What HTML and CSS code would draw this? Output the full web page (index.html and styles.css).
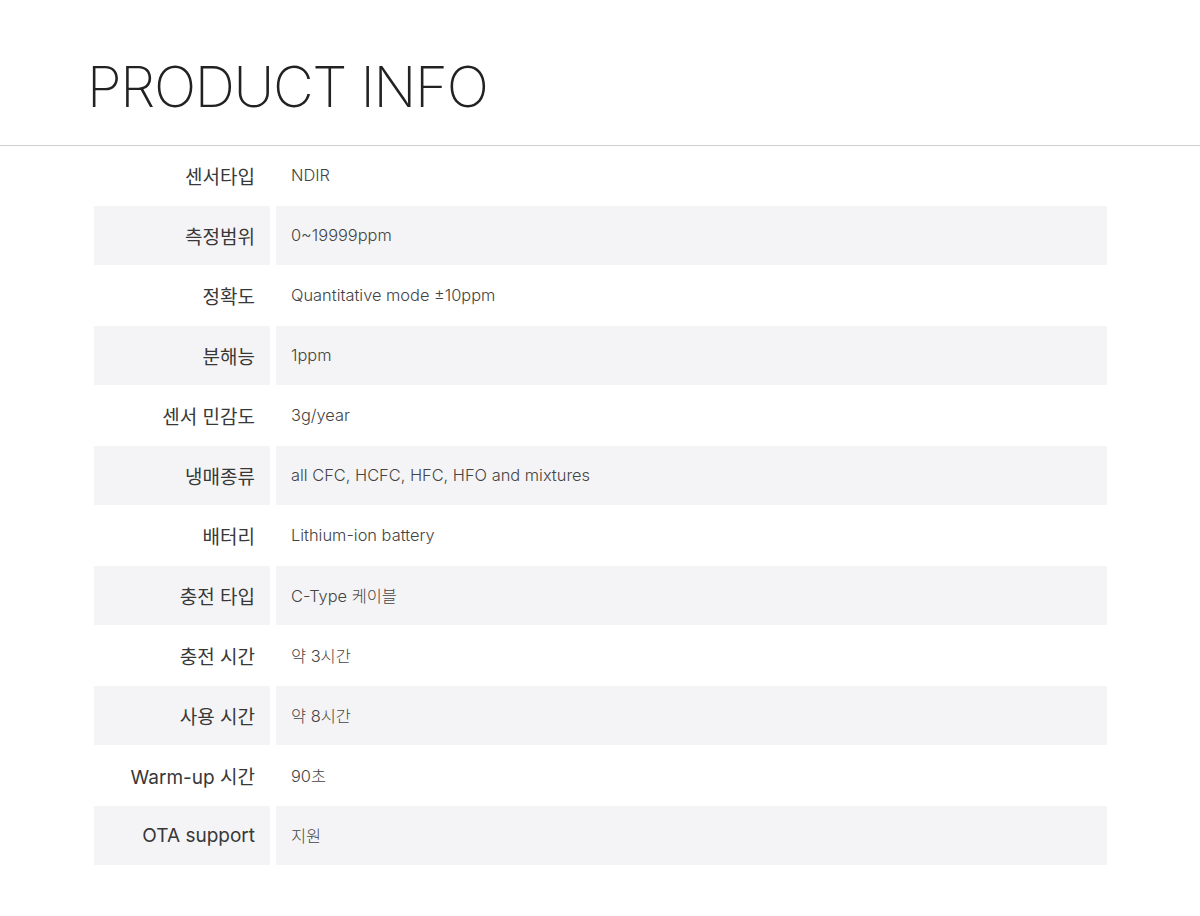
FILE: index.html
```html
<!DOCTYPE html>
<html lang="ko">
<head>
<meta charset="utf-8">
<link rel="stylesheet" href="styles.css">
</head>
<body>
<header class="head">
  <h1 class="title">PRODUCT INFO</h1>
</header>
<section class="spec">
  <div class="row"><div class="label">센서타입</div><div class="value">NDIR</div></div>
  <div class="row alt"><div class="label">측정범위</div><div class="value">0~19999ppm</div></div>
  <div class="row"><div class="label">정확도</div><div class="value">Quantitative mode ±10ppm</div></div>
  <div class="row alt"><div class="label">분해능</div><div class="value">1ppm</div></div>
  <div class="row"><div class="label">센서 민감도</div><div class="value">3g/year</div></div>
  <div class="row alt"><div class="label">냉매종류</div><div class="value">all CFC, HCFC, HFC, HFO and mixtures</div></div>
  <div class="row"><div class="label">배터리</div><div class="value">Lithium-ion battery</div></div>
  <div class="row alt"><div class="label">충전 타입</div><div class="value">C-Type 케이블</div></div>
  <div class="row"><div class="label">충전 시간</div><div class="value">약 3시간</div></div>
  <div class="row alt"><div class="label">사용 시간</div><div class="value">약 8시간</div></div>
  <div class="row"><div class="label">Warm-up 시간</div><div class="value">90초</div></div>
  <div class="row alt"><div class="label">OTA support</div><div class="value">지원</div></div>
</section>
</body>
</html>
```
FILE: styles.css
```css
html, body {
  margin: 0;
  padding: 0;
  background: #fff;
}
body {
  font-family: Inter, "Noto Sans CJK KR", sans-serif;
  color: #333;
}
.head {
  height: 146px;
  border-bottom: 1px solid #cfcfcf;
  box-sizing: border-box;
  padding: 53px 0 0 87px;
}
.title {
  margin: 0;
  font-size: 56px;
  line-height: 68px;
  font-weight: 200;
  color: #222;
  letter-spacing: -1.3px;
}
.spec {
  margin: 0 93px 0 94px;
  display: flex;
  flex-direction: column;
}
.row {
  display: grid;
  grid-template-columns: 176px 1fr;
  column-gap: 6px;
  height: 60px;
  padding-bottom: 1px;
  box-sizing: border-box;
}
.label, .value {
  display: flex;
  align-items: center;
}
.label {
  justify-content: flex-end;
  padding-right: 15px;
  font-size: 19px;
  font-weight: 400;
  color: #383838;
  padding-bottom: 1px;
}
.value {
  padding-left: 15px;
  font-size: 16.4px;
  font-weight: 300;
  color: #444;
  padding-bottom: 2px;
}
.alt .label, .alt .value {
  background: #f4f4f6;
}
```
